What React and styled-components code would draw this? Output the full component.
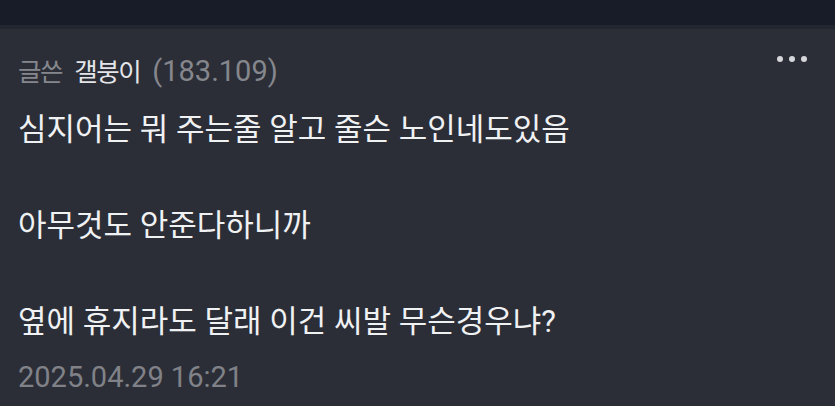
import React from "react";
import styled, { createGlobalStyle } from "styled-components";

const GlobalStyle = createGlobalStyle`
  html, body {
    margin: 0;
    padding: 0;
    background: #2b2e37;
  }
  body {
    font-family: "Roboto", "Noto Sans CJK KR", sans-serif;
  }
`;

const Page = styled.div`
  width: 835px;
  height: 406px;
  background: #2b2e37;
  overflow: hidden;
`;

const TopBar = styled.div`
  height: 25px;
  background: #171c28;
  border-bottom: 4px solid #22262f;
`;

const Comment = styled.div`
  padding: 22px 18px 0 18px;
`;

const Header = styled.div`
  display: flex;
  align-items: center;
  justify-content: space-between;
  height: 36px;
`;

const Meta = styled.div`
  display: flex;
  align-items: baseline;
  gap: 12px;
  font-size: 25.5px;
  letter-spacing: -1.4px;
  color: #85878d;
`;

const Nick = styled.span`
  color: #e4e5e8;
`;

const Ip = styled.span`
  font-size: 29px;
  letter-spacing: 0;
`;

const More = styled.div`
  display: flex;
  gap: 6px;
  margin-right: 10px;
  margin-top: -20px;
`;

const Dot = styled.span`
  width: 6px;
  height: 6px;
  border-radius: 50%;
  background: #d6d7da;
`;

const Body = styled.div`
  margin-top: 19px;
  font-size: 31px;
  line-height: 48px;
  color: #f0f1f3;
`;

const Line = styled.p`
  margin: 0;
  min-height: 48px;
`;

const Time = styled.div`
  margin-top: 14px;
  font-size: 29px;
  color: #808288;
`;

const lines = [
  "심지어는 뭐 주는줄 알고 줄슨 노인네도있음",
  "",
  "아무것도 안준다하니까",
  "",
  "옆에 휴지라도 달래 이건 씨발 무슨경우냐?",
];

export default function App() {
  return (
    <Page>
      <GlobalStyle />
      <TopBar />
      <Comment>
        <Header>
          <Meta>
            <span>글쓴</span>
            <Nick>갤붕이</Nick>
            <Ip>(183.109)</Ip>
          </Meta>
          <More>
            <Dot />
            <Dot />
            <Dot />
          </More>
        </Header>
        <Body>
          {lines.map((line, i) => (
            <Line key={i}>{line}</Line>
          ))}
        </Body>
        <Time>2025.04.29 16:21</Time>
      </Comment>
    </Page>
  );
}
